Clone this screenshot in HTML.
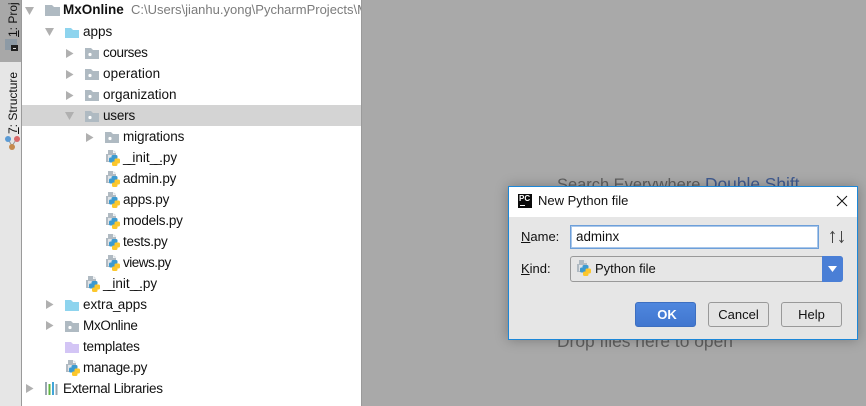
<!DOCTYPE html>
<html><head><meta charset="utf-8">
<style>
html,body{margin:0;padding:0}
body{width:866px;height:406px;overflow:hidden;position:relative;background:#fff;font-family:"Liberation Sans","Noto Sans CJK SC",sans-serif;font-size:13.5px;color:#111}
.a{position:absolute}
.t{position:absolute;white-space:nowrap;line-height:16px}
.t i{font-style:normal;letter-spacing:-2.8px;margin-right:0}
svg{position:absolute;overflow:visible}
u{text-decoration:underline}
</style></head><body>

<!-- strip -->
<div class="a" style="left:0;top:0;width:21px;height:406px;background:#e6e6e6;border-right:1px solid #9a9a9a"></div>
<div class="a" style="left:0;top:0;width:21px;height:62px;background:#a8a8a8"></div>
<div class="t" style="left:5px;top:37px;transform-origin:0 0;transform:rotate(-90deg);font-size:12px;width:40px;overflow:hidden"><u>1</u>: Proj</div>
<div class="a" style="left:5px;top:39px;width:12px;height:11px;background:#8d9aa5"></div>
<div class="a" style="left:11px;top:45px;width:7px;height:6px;background:#222"></div>
<div class="a" style="left:13px;top:48px;width:3px;height:1px;background:#ddd"></div>
<div class="t" style="left:5px;top:134px;transform-origin:0 0;transform:rotate(-90deg);font-size:12px"><u>7</u>: Structure</div>
<svg style="left:4px;top:135px" width="15" height="15"><path d="M4 4L8 11L12.500 4" stroke="#999" fill="none"/><circle cx="4" cy="4" r="3" fill="#5b9bd5"/><circle cx="13" cy="4" r="3" fill="#d96a6a"/><circle cx="8" cy="12" r="3" fill="#c58a4e"/></svg>

<!-- selected row -->
<div class="a" style="left:22px;top:105px;width:339px;height:21px;background:#d4d4d4"></div>

<!-- tree -->
<svg style="left:0;top:0" width="361" height="406">
<defs>
<g id="pk"><path d="M0 0H6L8 2H14V11H0Z" fill="#afbac2"/><circle cx="5" cy="6.500" r="1.600" fill="#fff"/></g>
<path id="bl" d="M0 0H6L8 2H14V11H0Z" fill="#8ed4ee"/>
<path id="pu" d="M0 0H6L8 2H14V11H0Z" fill="#d3c5f5"/>
<g id="py" transform="translate(-1 0)">
<path d="M4 0H9V3H12V12H2V4H4Z" fill="#b0bac2"/><path d="M9.500 0L12.500 2.500H9.500Z" fill="#d9dee2"/><rect x="4" y="5" width="6" height="6" fill="#fff" opacity=".6"/>
<rect x="7.500" y="5" width="6" height="4" rx="1.500" fill="#3c9ad0"/><rect x="5" y="7.500" width="6" height="5" rx="1.500" fill="#3c9ad0"/>
<rect x="10.500" y="8.500" width="5.500" height="5" rx="1.500" fill="#fcc72c"/><rect x="8" y="11.500" width="5.500" height="4.500" rx="1.500" fill="#fcc72c"/>
</g>
<path id="dn" d="M0 0H9L4.500 8Z" fill="#b0b0b0"/>
<path id="rt" d="M0 0L7.500 4.500L0 9Z" fill="#b0b0b0"/>
</defs>
<use href="#dn" x="25" y="7"/>
<path d="M45 5H52L54 7H60V16H45Z" fill="#afbac2"/>
<use href="#dn" x="45" y="28"/>
<path d="M65 28H71L73 30H79V38H65Z" fill="#8ed4ee"/>
<use href="#rt" x="66" y="49"/><use href="#pk" x="85" y="48"/>
<use href="#rt" x="66" y="70"/><use href="#pk" x="85" y="69"/>
<use href="#rt" x="66" y="91"/><use href="#pk" x="85" y="90"/>
<use href="#dn" x="65" y="112"/><use href="#pk" x="85" y="111"/>
<use href="#rt" x="86" y="133"/><use href="#pk" x="105" y="132"/>
<use href="#py" x="105" y="150"/>
<use href="#py" x="105" y="171"/>
<use href="#py" x="105" y="192"/>
<use href="#py" x="105" y="213"/>
<use href="#py" x="105" y="234"/>
<use href="#py" x="105" y="255"/>
<use href="#py" x="85" y="276"/>
<use href="#rt" x="46" y="300"/><use href="#bl" x="65" y="300"/>
<use href="#rt" x="46" y="321"/><use href="#pk" x="65" y="321"/>
<use href="#pu" x="65" y="342"/>
<use href="#py" x="65" y="360"/>
<use href="#rt" x="26" y="384"/>
<g><rect x="45" y="382" width="2" height="13" fill="#9aa7b0"/><rect x="48.500" y="384" width="2" height="11" fill="#62b543"/><rect x="52" y="382" width="2" height="13" fill="#40a5d8"/><rect x="55.500" y="384" width="2" height="11" fill="#9aa7b0"/></g>
</svg>

<div class="t" style="left:63px;top:2px;font-weight:bold;font-size:13.500px">MxOnline</div>
<div class="t" style="left:131px;top:2px;color:#7b7b7b;width:230px;overflow:hidden;font-size:13px">C:\Users\jianhu.yong\PycharmProjects\MxOnline</div>
<div class="t" style="left:83px;top:24px">apps</div>
<div class="t" style="left:103px;top:45px;letter-spacing:-.4px">courses</div>
<div class="t" style="left:103px;top:66px;letter-spacing:.1px">operation</div>
<div class="t" style="left:103px;top:87px">organization</div>
<div class="t" style="left:103px;top:108px;letter-spacing:-.2px">users</div>
<div class="t" style="left:123px;top:129px;letter-spacing:-.1px">migrations</div>
<div class="t" style="left:123px;top:150px"><i>__</i>init<i>__</i>.py</div>
<div class="t" style="left:123px;top:171px;letter-spacing:-.2px">admin.py</div>
<div class="t" style="left:123px;top:192px;letter-spacing:-.15px">apps.py</div>
<div class="t" style="left:123px;top:213px;letter-spacing:-.2px">models.py</div>
<div class="t" style="left:123px;top:234px;letter-spacing:-.25px">tests.py</div>
<div class="t" style="left:123px;top:255px;letter-spacing:-.5px">views.py</div>
<div class="t" style="left:103px;top:276px"><i>__</i>init<i>__</i>.py</div>
<div class="t" style="left:83px;top:297px">extra<i>_</i>apps</div>
<div class="t" style="left:83px;top:318px;letter-spacing:-.3px">MxOnline</div>
<div class="t" style="left:83px;top:339px;letter-spacing:-.2px">templates</div>
<div class="t" style="left:83px;top:360px;letter-spacing:-.3px">manage.py</div>
<div class="t" style="left:63px;top:381px;letter-spacing:-.3px">External Libraries</div>

<!-- right -->
<div class="a" style="left:361px;top:0;width:505px;height:406px;background:#a9a9a9;border-left:1px solid #9a9a9a;box-sizing:border-box"></div>
<div class="t" style="left:557px;top:174px;font-size:16.450px;line-height:20px;color:#5f5f5f">Search Everywhere <span style="color:#3f5a90;font-size:17.350px">Double Shift</span></div>
<div class="t" style="left:557px;top:331px;font-size:17.400px;line-height:20px;color:#5f5f5f">Drop files here to open</div>

<!-- dialog -->
<div class="a" style="left:508px;top:186px;width:350px;height:154px;background:#e6e6e6;border:1px solid #1c87d8;box-sizing:border-box;box-shadow:0 0 12px rgba(0,0,0,.28)">
<div class="a" style="left:0;top:0;width:348px;height:30px;background:#fff"></div>
</div>
<div class="a" style="left:518px;top:194px;width:14px;height:14px;background:#0a0a0a"></div>
<div class="t" style="left:519px;top:194px;font-size:8px;line-height:9px;font-weight:bold;color:#fff">PC</div>
<div class="a" style="left:520px;top:205px;width:5px;height:1px;background:#fff"></div>
<div class="t" style="left:538px;top:193px;font-size:13px">New Python file</div>
<svg style="left:836px;top:195px" width="12" height="12"><path d="M1 1L11 11M11 1L1 11" stroke="#111" stroke-width="1" fill="none"/></svg>

<div class="t" style="left:521px;top:229px;font-size:13px"><u>N</u>ame:</div>
<div class="a" style="left:570px;top:225px;width:249px;height:24px;background:#fff;border:1px solid #6d9fd9;box-shadow:0 0 0 1px #a9c7ea inset;box-sizing:border-box"></div>
<div class="t" style="left:576px;top:229px;font-size:13.400px">adminx</div>
<svg style="left:829px;top:230px" width="16" height="14"><path d="M3.500 13V2M1.500 4L3.500 1.500L5.500 4M12.500 1V12M10.500 10L12.500 12.500L14.500 10" stroke="#444" fill="none"/></svg>

<div class="t" style="left:521px;top:261px;font-size:13px"><u>K</u>ind:</div>
<div class="a" style="left:570px;top:256px;width:273px;height:26px;background:#e6e6e6;border:1px solid #999;border-radius:3px;box-sizing:border-box"></div>
<div class="a" style="left:822px;top:256px;width:21px;height:26px;background:#4a7fd6;border-radius:0 3px 3px 0"></div>
<svg style="left:828px;top:266px" width="10" height="7"><path d="M0 0H9L4.500 6Z" fill="#fff"/></svg>
<svg style="left:0;top:0" width="866" height="406"><use href="#py" x="576" y="260"/></svg>
<div class="t" style="left:595px;top:261px;font-size:13px">Python file</div>

<div class="a" style="left:635px;top:302px;width:61px;height:25px;background:linear-gradient(#4f87de,#4176cf);border:1px solid #3d6fc0;border-radius:3px;box-sizing:border-box;color:#fff;font-weight:bold;text-align:center;line-height:23px;font-size:13px;padding-left:3px">OK</div>
<div class="a" style="left:708px;top:302px;width:61px;height:25px;background:#e4e4e4;border:1px solid #999;border-radius:3px;box-sizing:border-box;text-align:center;line-height:23px;font-size:13px">Cancel</div>
<div class="a" style="left:781px;top:302px;width:61px;height:25px;background:#e4e4e4;border:1px solid #999;border-radius:3px;box-sizing:border-box;text-align:center;line-height:23px;font-size:13px">Help</div>
</body></html>
